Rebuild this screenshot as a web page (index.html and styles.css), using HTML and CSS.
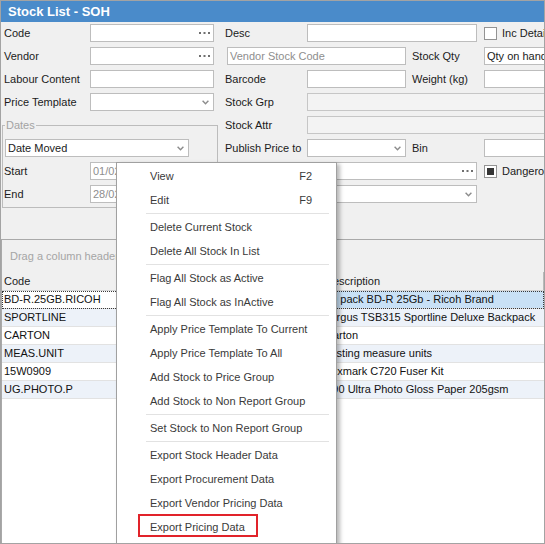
FILE: index.html
```html
<!DOCTYPE html>
<html lang="en">
<head>
  <meta charset="UTF-8" />
  <title>Stock List - SOH</title>
  <link rel="stylesheet" href="styles.css">
</head>
<body>

  <div class="window">
    <div class="title-bar">Stock List - SOH</div>

    <div class="form">
      <div class="filters">
        <div class="lbl col-1">Code</div>
        <div class="field col-2">
          <svg class="dots" width="11" height="2" viewBox="0 0 11 2"><rect x="0" width="2" height="2"/><rect x="4.5" width="2" height="2"/><rect x="9" width="2" height="2"/></svg>
        </div>
        <div class="lbl col-4">Desc</div>
        <div class="field span-desc"></div>
        <label class="check col-9"><span class="box"></span>Inc Details</label>

        <div class="lbl col-1">Vendor</div>
        <div class="field col-2">
          <svg class="dots" width="11" height="2" viewBox="0 0 11 2"><rect x="0" width="2" height="2"/><rect x="4.5" width="2" height="2"/><rect x="9" width="2" height="2"/></svg>
        </div>
        <div class="field span-vendor placeholder">Vendor Stock Code</div>
        <div class="lbl col-7">Stock Qty</div>
        <div class="field col-9">Qty on hand</div>

        <div class="lbl col-1">Labour Content</div>
        <div class="field col-2"></div>
        <div class="lbl col-4">Barcode</div>
        <div class="field col-5"></div>
        <div class="lbl col-7">Weight (kg)</div>
        <div class="field col-9"></div>

        <div class="lbl col-1">Price Template</div>
        <div class="field col-2">
          <svg class="chev" width="7" height="5" viewBox="0 0 7 5"><path d="M0.6 0.8 L3.5 3.8 L6.4 0.8"/></svg>
        </div>
        <div class="lbl col-4">Stock Grp</div>
        <div class="field disabled span-wide"></div>
      </div>

      <div class="lower">
        <fieldset class="dates">
          <legend>Dates</legend>
          <div class="dates-grid">
            <div class="field date-type">Date Moved
              <svg class="chev" width="7" height="5" viewBox="0 0 7 5"><path d="M0.6 0.8 L3.5 3.8 L6.4 0.8"/></svg>
            </div>
            <div class="lbl">Start</div>
            <div class="field muted">01/02/2017</div>
            <div class="lbl">End</div>
            <div class="field muted">28/02/2017</div>
          </div>
        </fieldset>

        <div class="lower-right">
          <div class="lbl col-1">Stock Attr</div>
          <div class="field disabled span-rest"></div>

          <div class="lbl col-1">Publish Price to</div>
          <div class="field col-2">
            <svg class="chev" width="7" height="5" viewBox="0 0 7 5"><path d="M0.6 0.8 L3.5 3.8 L6.4 0.8"/></svg>
          </div>
          <div class="lbl col-4">Bin</div>
          <div class="field col-6"></div>

          <div class="field span-mid">
            <svg class="dots" width="11" height="2" viewBox="0 0 11 2"><rect x="0" width="2" height="2"/><rect x="4.5" width="2" height="2"/><rect x="9" width="2" height="2"/></svg>
          </div>
          <label class="check col-6"><span class="box checked"></span>Dangerous Goods</label>

          <div class="field span-mid">
            <svg class="chev" width="7" height="5" viewBox="0 0 7 5"><path d="M0.6 0.8 L3.5 3.8 L6.4 0.8"/></svg>
          </div>
        </div>
      </div>
    </div>

    <div class="grid">
      <div class="group-panel">Drag a column header here to group by that column</div>
      <div class="grid-head">
        <div class="cell code">Code</div>
        <div class="cell desc">Description</div>
      </div>
      <div class="grid-body" id="rows"></div>
    </div>

    <!-- right click menu -->
    <div class="context-menu">
      <div class="menu-item"><span>View</span><span>F2</span></div>
      <div class="menu-item"><span>Edit</span><span>F9</span></div>
      <div class="menu-sep"></div>
      <div class="menu-item"><span>Delete Current Stock</span></div>
      <div class="menu-item"><span>Delete All Stock In List</span></div>
      <div class="menu-sep"></div>
      <div class="menu-item"><span>Flag All Stock as Active</span></div>
      <div class="menu-item"><span>Flag All Stock as InActive</span></div>
      <div class="menu-sep"></div>
      <div class="menu-item"><span>Apply Price Template To Current</span></div>
      <div class="menu-item"><span>Apply Price Template To All</span></div>
      <div class="menu-item"><span>Add Stock to Price Group</span></div>
      <div class="menu-item"><span>Add Stock to Non Report Group</span></div>
      <div class="menu-sep"></div>
      <div class="menu-item"><span>Set Stock to Non Report Group</span></div>
      <div class="menu-sep"></div>
      <div class="menu-item"><span>Export Stock Header Data</span></div>
      <div class="menu-item"><span>Export Procurement Data</span></div>
      <div class="menu-item"><span>Export Vendor Pricing Data</span></div>
      <div class="menu-item marked"><span>Export Pricing Data</span></div>
    </div>
  </div>

  <script>
    const stock = [
      { code: "BD-R.25GB.RICOH", desc: "10 pack BD-R 25Gb - Ricoh Brand" },
      { code: "SPORTLINE", desc: "Targus TSB315 Sportline Deluxe Backpack" },
      { code: "CARTON", desc: "Carton" },
      { code: "MEAS.UNIT", desc: "Testing measure units" },
      { code: "15W0909", desc: "Lexmark C720 Fuser Kit" },
      { code: "UG.PHOTO.P", desc: "A90 Ultra Photo Gloss Paper 205gsm" }
    ];

    const rowsEl = document.getElementById('rows');

    stock.forEach((item, index) => {
      const div = document.createElement('div');
      div.className = index === 0 ? 'row focused' : 'row';
      div.innerHTML = `
        <div class="cell code">${item.code}</div>
        <div class="cell desc">${item.desc}</div>
      `;
      rowsEl.appendChild(div);
    });
  </script>
</body>
</html>
```

FILE: styles.css
```css
body {
  margin: 0;
  font-family: "Liberation Sans", Arial, sans-serif;
  font-size: 11px;
  color: #1b1b1b;
  background: #fff;
}

.window {
  position: relative;
  width: 545px;
  height: 544px;
  box-sizing: border-box;
  border: 1px solid #a3a3a3;
  background: #f0f0f0;
  overflow: hidden;
  display: flex;
  flex-direction: column;
}

.title-bar {
  flex-shrink: 0;
  height: 21px;
  line-height: 21px;
  padding-left: 7px;
  background: #4a8bca;
  color: #fff;
  font-size: 13px;
  font-weight: bold;
}

/* filter form */

.form {
  flex-shrink: 0;
  padding: 2px 0 0 3px;
}

.filters {
  display: grid;
  grid-template-columns: 86px 124px 11px 82px 99px 6px 65px 7px 80px;
  grid-auto-rows: 18px;
  row-gap: 5px;
}

.col-1 { grid-column: 1; }
.col-2 { grid-column: 2; }
.col-4 { grid-column: 4; }
.col-5 { grid-column: 5; }
.col-6 { grid-column: 6; }
.col-7 { grid-column: 7; }
.col-9 { grid-column: 9; }
.span-desc { grid-column: 5 / 8; }
.span-vendor { grid-column: 4 / 6; margin-left: 2px; }
.span-wide { grid-column: 5 / 10; }

.lbl {
  line-height: 18px;
  white-space: nowrap;
}

.field {
  height: 18px;
  box-sizing: border-box;
  border: 1px solid #bdbdbd;
  background: #fff;
  display: flex;
  align-items: center;
  padding: 0 3px 0 2px;
  white-space: nowrap;
  overflow: hidden;
}

.field .dots {
  margin-left: auto;
  flex-shrink: 0;
  fill: #6f6f6f;
}

.field .chev {
  margin-left: auto;
  margin-right: 1px;
  flex-shrink: 0;
  fill: none;
  stroke: #8c8c8c;
  stroke-width: 1.4;
}

.field.disabled {
  background: #f3f3f3;
  border-color: #c6c6c6;
}

.field.muted,
.placeholder {
  color: #8e8e8e;
}

.check {
  display: flex;
  align-items: center;
  gap: 5px;
  white-space: nowrap;
}

.check .box {
  flex-shrink: 0;
  width: 13px;
  height: 13px;
  box-sizing: border-box;
  border: 1px solid #939393;
  background: #fff;
  display: flex;
  align-items: center;
  justify-content: center;
}

.check .box.checked::after {
  content: '';
  width: 7px;
  height: 7px;
  background: #353535;
}

.lower {
  display: flex;
  align-items: flex-start;
  margin-top: 5px;
}

.dates {
  flex-shrink: 0;
  width: 216px;
  min-width: 0;
  box-sizing: border-box;
  margin: 3px 0 0 -2px;
  padding: 0 0 4px 2px;
  border: 1px solid #bcbcbc;
}

.dates legend {
  padding: 0 1px;
  line-height: 13px;
  color: #a3a3a3;
}

.dates-grid {
  display: grid;
  grid-template-columns: 85px 120px;
  grid-auto-rows: 18px;
  row-gap: 5px;
  padding-top: 7px;
}

.dates-grid .lbl {
  margin-left: -1px;
}

.date-type {
  grid-column: 1 / -1;
  width: 184px;
}

.lower-right {
  flex-shrink: 0;
  margin-left: 7px;
  display: grid;
  grid-template-columns: 82px 99px 6px 65px 7px 80px;
  grid-auto-rows: 18px;
  row-gap: 5px;
}

.span-rest { grid-column: 2 / -1; }
.span-mid { grid-column: 2 / 5; }

/* stock grid */

.grid {
  flex: 1;
  min-height: 0;
  margin-top: 31px;
  border-top: 1px solid #a9a9a9;
  border-left: 1px solid #a9a9a9;
  background: #fff;
}

.group-panel {
  height: 32px;
  line-height: 32px;
  padding-left: 8px;
  background: #f0f0f0;
  color: #a5a5a5;
  white-space: nowrap;
}

.grid-head,
.row {
  display: flex;
  box-sizing: border-box;
  white-space: nowrap;
}

.grid-head {
  height: 19px;
  line-height: 18px;
  background: #f0f0f0;
  border-bottom: 1px solid #d4d4d4;
}

.grid-head .desc {
  border-right: 1px solid #b9b9b9;
}

.row {
  height: 18px;
  line-height: 17px;
  border-bottom: 1px solid #e2e2e2;
  color: #111;
}

.row:nth-child(even) {
  background: #edf2f9;
}

.row.focused {
  outline: 1px dotted #3a3a3a;
  outline-offset: -1px;
}

.row.focused .desc {
  background: #c9e1f6;
}

.cell {
  box-sizing: border-box;
  overflow: hidden;
}

.cell.code {
  width: 320px;
  padding-left: 2px;
}

.cell.desc {
  flex: 1;
  padding-left: 3px;
}

/* context menu */

.context-menu {
  position: absolute;
  left: 115px;
  top: 161px;
  width: 221px;
  box-sizing: border-box;
  padding: 1px 0 20px;
  background: #fff;
  border: 1px solid #a0a0a0;
  box-shadow: 3px 2px 4px rgba(0, 0, 0, 0.28);
  color: #3a3a3a;
}

.menu-item {
  position: relative;
  height: 24px;
  display: flex;
  align-items: center;
  justify-content: space-between;
  padding: 0 24px 0 33px;
  white-space: nowrap;
}

.menu-sep {
  height: 1px;
  margin: 1px 7px 1px 29px;
  background: #e2e2e2;
}

.menu-item.marked::after {
  content: '';
  position: absolute;
  left: 21px;
  top: -1px;
  width: 120px;
  height: 23px;
  box-sizing: border-box;
  border: 2px solid #e1232a;
}
```
